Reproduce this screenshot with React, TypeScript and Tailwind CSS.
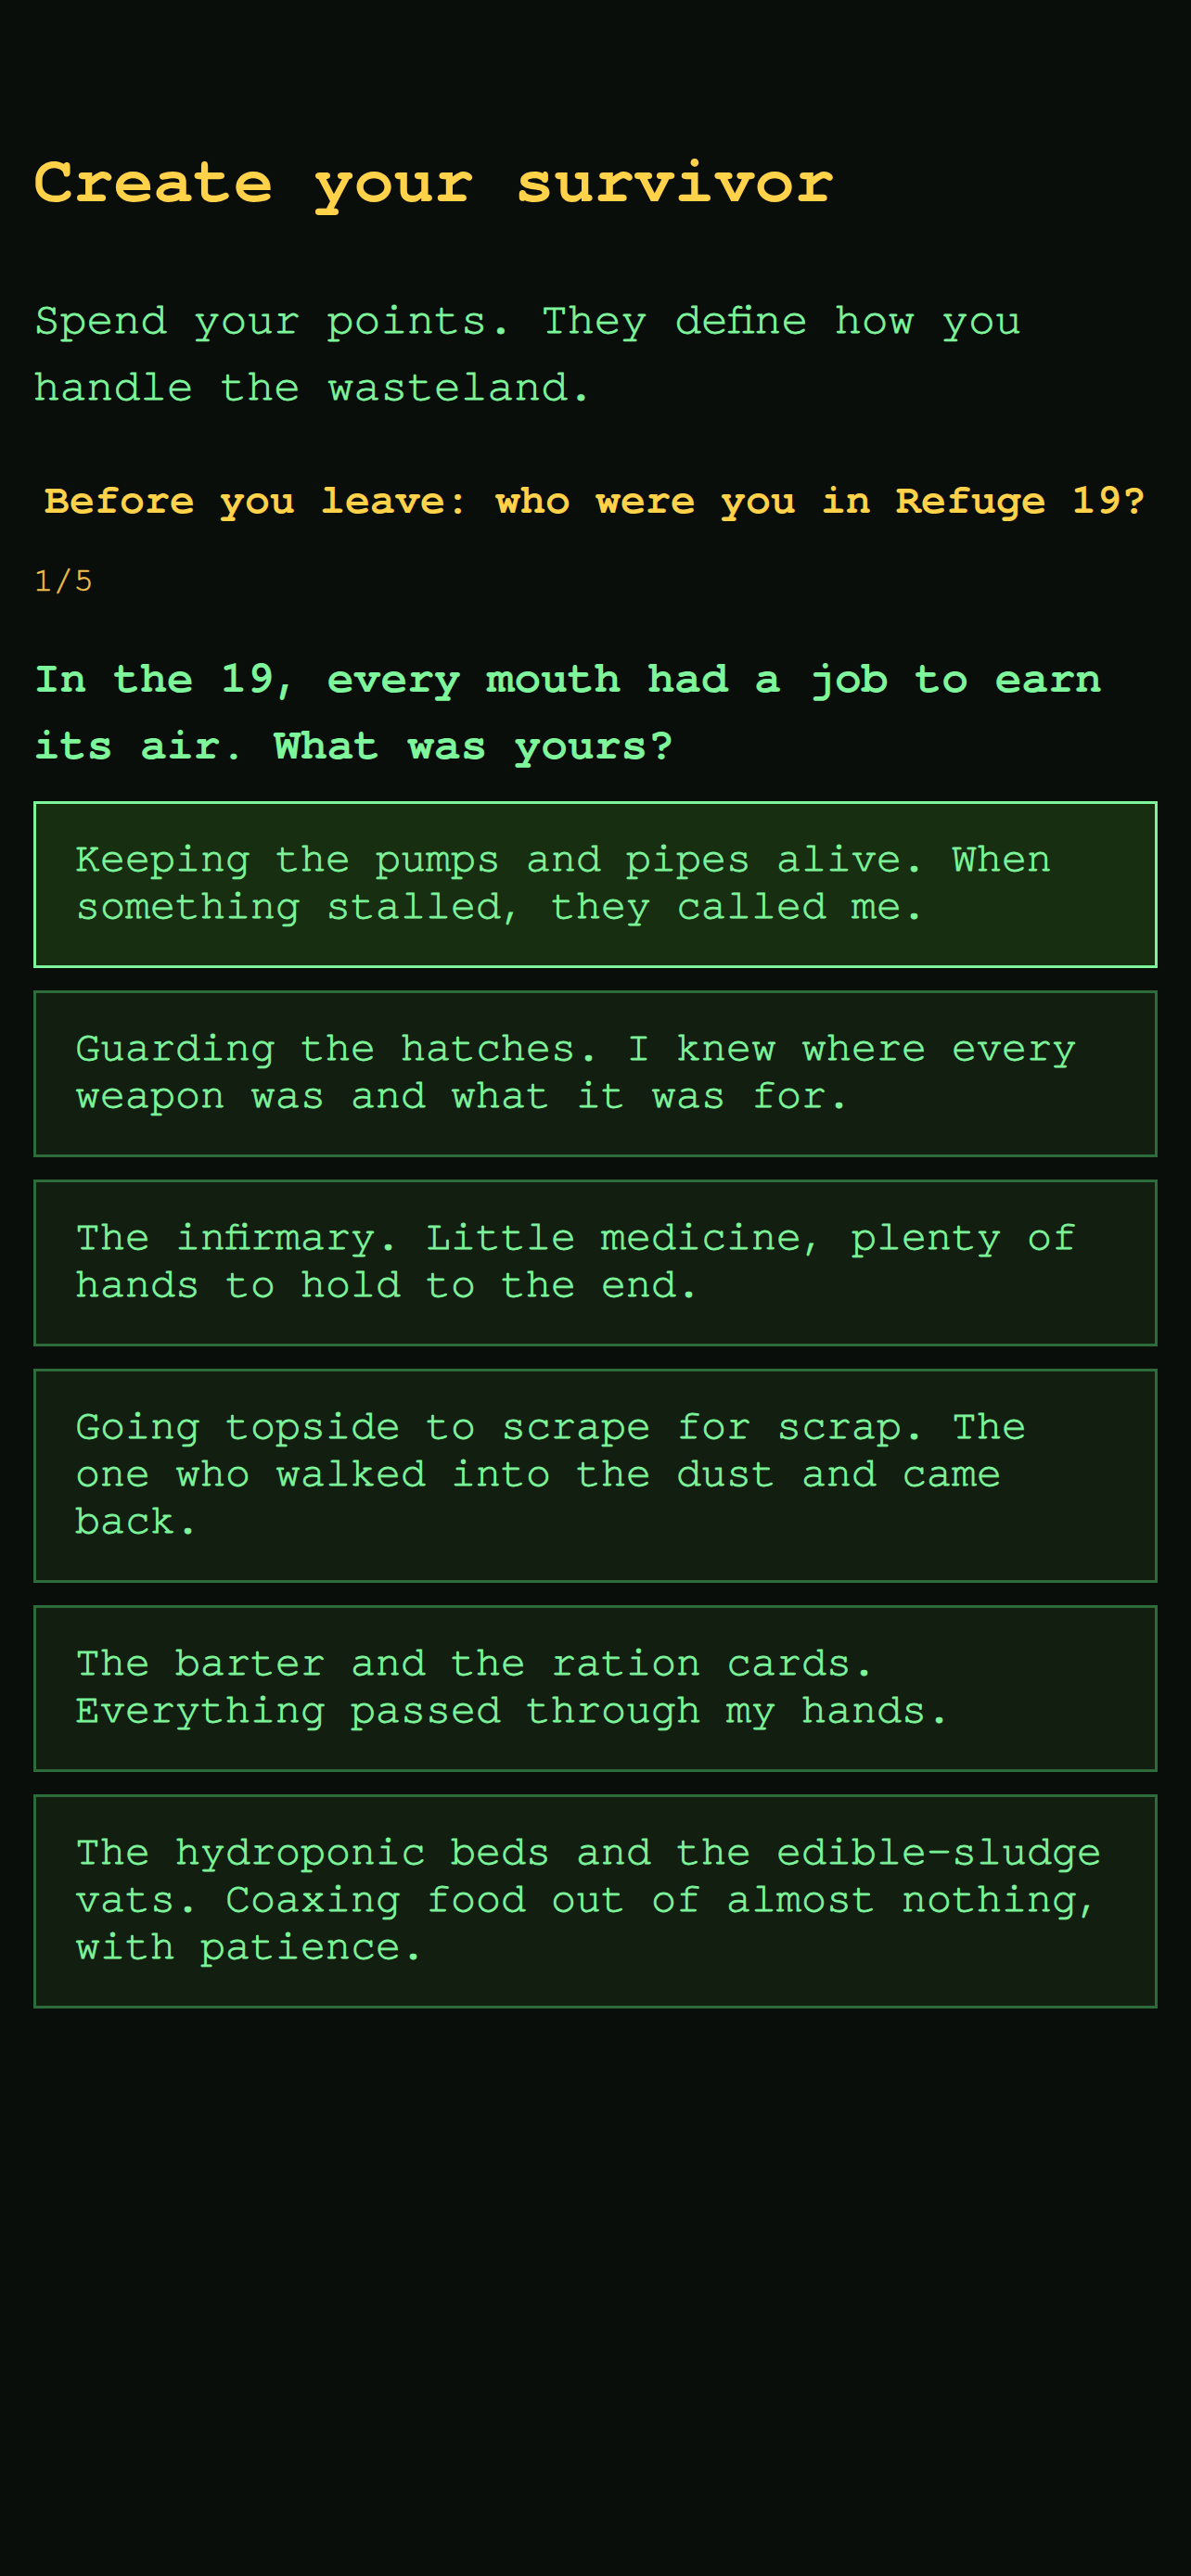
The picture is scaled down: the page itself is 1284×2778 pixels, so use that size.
import { useState } from 'react';

const MONO = '"TeX Gyre Cursor", FreeMono, "Liberation Mono", monospace';

const OPTIONS: string[] = [
  'Keeping the pumps and pipes alive. When something stalled, they called me.',
  'Guarding the hatches. I knew where every weapon was and what it was for.',
  'The infirmary. Little medicine, plenty of hands to hold to the end.',
  'Going topside to scrape for scrap. The one who walked into the dust and came back.',
  'The barter and the ration cards. Everything passed through my hands.',
  'The hydroponic beds and the edible-sludge vats. Coaxing food out of almost nothing, with patience.',
];

export default function App() {
  const [picked, setPicked] = useState<number>(0);

  return (
    <div
      className="min-h-screen bg-[#0a0e0a] px-[36px] pt-[135px] pb-[120px] text-[#7ef59b]"
      style={{ fontFamily: MONO }}
    >
      <h1 className="text-[72px] leading-[108px] font-bold text-[#ffd24a]">Create your survivor</h1>

      <p className="mt-[63px] text-[48px] leading-[72px] [-webkit-text-stroke:0.8px_currentColor]">
        Spend your points. They define how you handle the wasteland.
      </p>

      <h2 className="mt-[52px] text-center text-[45px] leading-[68px] font-bold text-[#ffd24a]">
        Before you leave: who were you in Refuge 19?
      </h2>

      <div className="mt-[28px] text-[36px] leading-[54px] text-[#f2c04a] [-webkit-text-stroke:0.6px_currentColor]">1/5</div>

      <h3 className="mt-[39px] text-[48px] leading-[72px] font-bold">
        In the 19, every mouth had a job to earn its air. What was yours?
      </h3>

      {/* Answer list */}
      <div className="mt-[29px] flex flex-col gap-[24px]">
        {OPTIONS.map((o, i) => (
          <button
            key={i}
            onClick={() => setPicked(i)}
            className={`block w-full border-[3px] px-[42px] pt-[31px] pb-[41px] text-left text-[45px] leading-[51px] [-webkit-text-stroke:0.8px_currentColor] ${
              picked === i ? 'border-[#7ef59b] bg-[#172e10]' : 'border-[#2e6b3a] bg-[#121e10]'
            }`}
            style={{ fontFamily: MONO }}
          >
            {o}
          </button>
        ))}
      </div>
    </div>
  );
}
